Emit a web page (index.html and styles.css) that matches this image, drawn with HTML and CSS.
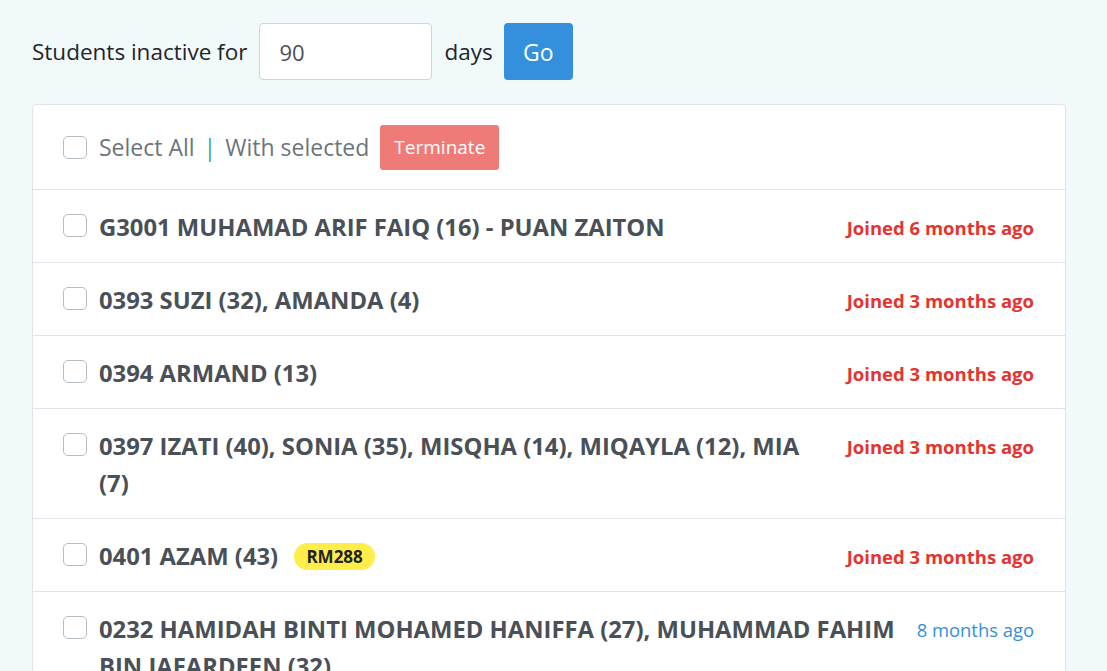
FILE: index.html
```html
<!DOCTYPE html>
<html>
<head>
<meta charset="utf-8">
<link rel="stylesheet" href="styles.css">
</head>
<body>
<div class="page">
  <form class="filter">
    <label class="filter-label">Students inactive for</label>
    <input class="filter-input" type="text" value="90">
    <span class="filter-label">days</span>
    <button type="button" class="btn-go">Go</button>
  </form>
  <div class="card">
    <div class="card-head">
      <span class="check"></span>
      <span class="muted">Select All</span>
      <span class="sep">|</span>
      <span class="muted">With selected</span>
      <button type="button" class="btn-terminate">Terminate</button>
    </div>
    <div class="row">
      <span class="check"></span>
      <div class="name">G3001 MUHAMAD ARIF FAIQ (16) - PUAN ZAITON</div>
      <div class="joined">Joined 6 months ago</div>
    </div>
    <div class="row">
      <span class="check"></span>
      <div class="name">0393 SUZI (32), AMANDA (4)</div>
      <div class="joined">Joined 3 months ago</div>
    </div>
    <div class="row">
      <span class="check"></span>
      <div class="name">0394 ARMAND (13)</div>
      <div class="joined">Joined 3 months ago</div>
    </div>
    <div class="row">
      <span class="check"></span>
      <div class="name">0397 IZATI (40), SONIA (35), MISQHA (14), MIQAYLA (12), MIA (7)</div>
      <div class="joined">Joined 3 months ago</div>
    </div>
    <div class="row">
      <span class="check"></span>
      <div class="name">0401 AZAM (43) <span class="badge">RM288</span></div>
      <div class="joined">Joined 3 months ago</div>
    </div>
    <div class="row">
      <span class="check"></span>
      <div class="name">0232 HAMIDAH BINTI MOHAMED HANIFFA (27), MUHAMMAD FAHIM BIN JAFARDEEN (32)</div>
      <div class="ago">8 months ago</div>
    </div>
  </div>
</div>
</body>
</html>
```
FILE: styles.css
```css
html, body {
  margin: 0;
  padding: 0;
  background: #f2f9fb;
  font-family: "Open Sans", "Noto Sans", sans-serif;
  color: #212529;
  overflow: hidden;
}
.page {
  padding: 23px 41px 0 32px;
}
.filter {
  display: flex;
  align-items: center;
  height: 57px;
  margin: 0;
}
.filter-label {
  font-size: 22.5px;
  color: #212529;
}
.filter-input {
  box-sizing: border-box;
  width: 173px;
  height: 57px;
  margin: 0 12px;
  padding: 0 19px;
  border: 1px solid #ced4da;
  border-radius: 4px;
  font-family: inherit;
  font-size: 22px;
  color: #495057;
  background: #fff;
}
.btn-go {
  box-sizing: border-box;
  height: 57px;
  width: 69px;
  margin-left: 11px;
  border: none;
  border-radius: 4px;
  background: #3490dc;
  color: #fff;
  font-family: inherit;
  font-size: 23px;
}
.card {
  margin-top: 24px;
  background: #fff;
  border: 1px solid #dfe3e7;
  border-radius: 4px;
}
.card-head {
  display: flex;
  align-items: center;
  height: 84px;
  padding: 0 31px 0 30px;
  border-bottom: 1px solid #dfe3e7;
}
.check {
  box-sizing: border-box;
  flex: none;
  width: 24px;
  height: 23px;
  border: 1px solid #b4bcc4;
  border-radius: 5px;
  background: #fff;
  margin-right: 12px;
}
.muted {
  font-size: 23px;
  color: #6c757d;
}
.sep {
  font-size: 23px;
  color: #38a6a6;
  margin: 0 9px;
}
.btn-terminate {
  margin-left: 11px;
  height: 45px;
  padding: 0 14px;
  border: none;
  border-radius: 3px;
  background: #ef7b78;
  color: #fff;
  font-family: inherit;
  font-size: 19px;
}
.row {
  display: flex;
  align-items: flex-start;
  padding: 19px 31px 16px 30px;
  border-bottom: 1px solid #dfe3e7;
}
.row .check {
  margin-top: 5px;
}
.name {
  flex: 1;
  font-size: 23.8px;
  font-weight: 700;
  line-height: 37px;
  color: #4a5057;
}
.joined {
  flex: none;
  margin-left: 30px;
  font-size: 18.5px;
  font-weight: 700;
  line-height: 37px;
  color: #e3342f;
}
.ago {
  flex: none;
  margin-left: 8px;
  font-size: 18.4px;
  line-height: 37px;
  color: #3490dc;
}
.badge {
  display: inline-block;
  vertical-align: 2px;
  margin-left: 10px;
  padding: 0 12px;
  height: 27px;
  line-height: 27px;
  border-radius: 14px;
  background: #ffed4a;
  color: #222;
  font-size: 17px;
  font-weight: 700;
}
```
